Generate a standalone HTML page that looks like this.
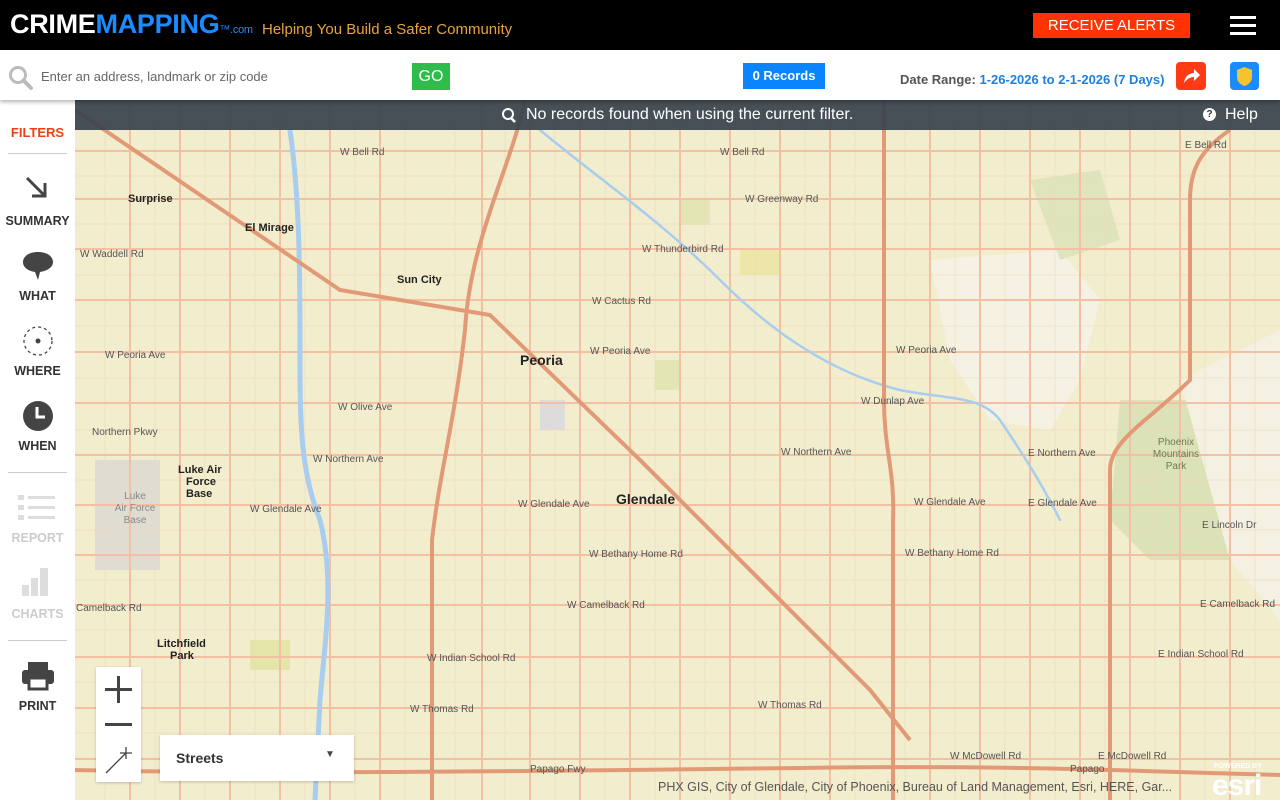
<!DOCTYPE html>
<html><head><meta charset="utf-8"><style>
*{margin:0;padding:0;box-sizing:border-box}
body{width:1280px;height:800px;overflow:hidden;font-family:"Liberation Sans",Arial,sans-serif;background:#f2edcd;position:relative}
#top{position:absolute;left:0;top:0;width:1280px;height:50px;background:#000}
#logo{position:absolute;left:10px;top:9px;font-size:27px;font-weight:bold;letter-spacing:-0.3px;color:#fff}
#logo .b{color:#1a8cff}
#logo small{font-size:11px;color:#1a8cff;font-weight:normal}
#tag{position:absolute;left:262px;top:21px;color:#e8a43c;font-size:15px}
#alerts{position:absolute;left:1033px;top:13px;width:157px;height:25px;background:#ff3300;color:#fff;font-size:15px;text-align:center;line-height:25px}
.hb{position:absolute;left:1230px;width:26px;height:3px;background:#fff}
#bar{position:absolute;left:0;top:50px;width:1280px;height:50px;background:#fff;box-shadow:0 2px 4px rgba(0,0,0,.3);z-index:3}
#ph{position:absolute;left:41px;top:19px;color:#666;font-size:13px}
#go{position:absolute;left:412px;top:63px;width:38px;height:27px;background:#2ebd4a;color:#fff;font-size:16px;text-align:center;line-height:27px;z-index:4}
#rec{position:absolute;left:743px;top:63px;width:82px;height:26px;background:#0a84ff;color:#fff;font-size:13px;font-weight:bold;text-align:center;line-height:26px;z-index:4}
#dr{position:absolute;left:900px;top:72px;font-size:13px;font-weight:bold;color:#555;z-index:4}
#dr span{color:#1f7fdc}
#side{position:absolute;left:0;top:100px;width:75px;height:700px;background:#fff;z-index:2;text-align:center}
.sl{position:absolute;left:0;width:75px;font-size:12.5px;font-weight:bold;color:#333;text-align:center}
.sep{position:absolute;left:8px;width:59px;height:1px;background:#ccc}
#msg{position:absolute;left:75px;top:100px;width:1205px;height:30px;background:rgba(58,68,76,.93);color:#fff;font-size:16px;z-index:2}
#map{position:absolute;left:75px;top:100px}
.ctl{position:absolute;background:#fff;z-index:3;box-shadow:0 1px 3px rgba(0,0,0,.2)}
</style></head><body>
<div id="top">
<div id="logo">CRIME<span class="b">MAPPING</span><small>™.com</small></div>
<div id="tag">Helping You Build a Safer Community</div>
<div id="alerts">RECEIVE ALERTS</div>
<div class="hb" style="top:16px"></div><div class="hb" style="top:24px"></div><div class="hb" style="top:32px"></div>
</div>
<div id="bar">
<svg style="position:absolute;left:8px;top:15px" width="26" height="26"><circle cx="10" cy="10" r="7.5" fill="none" stroke="#bbb" stroke-width="3"/><line x1="15.5" y1="15.5" x2="23" y2="23" stroke="#bbb" stroke-width="4" stroke-linecap="round"/></svg>
<div id="ph">Enter an address, landmark or zip code</div>
<div style="position:absolute;left:1176px;top:12px;width:30px;height:28px;background:#ff3a14;border-radius:4px"><svg width="30" height="28"><path d="M8 21 C9 14 13 11 18 11 L18 7 L24 13 L18 19 L18 15 C14 15 11 17 8 21Z" fill="#fff"/></svg></div>
<div style="position:absolute;left:1230px;top:12px;width:29px;height:28px;background:#1a8cff;border-radius:4px"><svg width="29" height="28"><path d="M14.5 5 L22 8 L22 15 C22 20 18 23 14.5 24 C11 23 7 20 7 15 L7 8Z" fill="#f4c430"/></svg></div>
</div>
<div id="go">GO</div><div id="rec">0 Records</div>
<div id="dr">Date Range: <span>1-26-2026 to 2-1-2026 (7 Days)</span></div>

<svg id="map" width="1205" height="700" viewBox="75 100 1205 700">
<rect x="75" y="100" width="1205" height="700" fill="#f2edcd"/>
<path d="M930 260 L1060 250 L1100 300 L1080 380 L1050 430 L990 420 L950 360Z" fill="#f5f2e4"/>
<path d="M1120 400 L1230 400 L1230 560 L1150 560 L1110 520Z" fill="#dce2b8"/>
<path d="M1180 380 L1280 330 L1280 620 L1230 560Z" fill="#f4f1e2"/>
<path d="M1030 180 L1100 170 L1120 240 L1060 260Z" fill="#dfe4bc"/>
<rect x="95" y="460" width="65" height="110" fill="#dfddd2"/>
<rect x="680" y="200" width="30" height="25" fill="#e2e5b4"/>
<rect x="740" y="250" width="40" height="25" fill="#ece6a8"/>
<rect x="655" y="360" width="25" height="30" fill="#e2e5b4"/>
<rect x="540" y="400" width="25" height="30" fill="#dcdcdc"/>
<rect x="250" y="640" width="40" height="30" fill="#e3e6a8"/>
<g stroke="#efd8bd" stroke-width="1" opacity=".6">
<path d="M75 126H1280M75 176H1280M75 224H1280M75 275H1280M75 326H1280M75 378H1280M75 430H1280M75 480H1280M75 530H1280M75 580H1280M75 630H1280M75 682H1280M75 733H1280"/>
<path d="M105 100V800M155 100V800M205 100V800M255 100V800M305 100V800M355 100V800M405 100V800M455 100V800M505 100V800M555 100V800M605 100V800M655 100V800M705 100V800M755 100V800M805 100V800M855 100V800M905 100V800M955 100V800M1005 100V800M1055 100V800M1105 100V800M1155 100V800M1205 100V800M1255 100V800"/>
</g>
<g stroke="#f3c0a4" stroke-width="2" fill="none">
<path d="M75 151H1280M75 199H1280M75 249H1280M75 300H1280M75 352H1280M75 403H1280M75 455H1280M75 505H1280M75 555H1280M75 605H1280M75 657H1280M75 708H1280M75 759H1280"/>
<path d="M130 100V800M180 100V800M230 100V800M280 100V800M330 100V800M380 100V800M482 100V800M530 100V800M580 100V800M630 100V800M680 100V800M730 100V800M780 100V800M830 100V800M930 100V800M980 100V800M1030 100V800M1080 100V800M1130 100V800M1180 100V800M1230 100V800"/>
</g>
<g stroke="#a8cdef" fill="none" stroke-linecap="round">
<path d="M290 130 C300 200 300 280 300 350 C300 420 300 470 320 520 C335 580 325 640 320 700 L315 800" stroke-width="5"/>
<path d="M540 130 C600 180 660 220 720 280 C760 320 820 370 900 390 C950 400 980 395 1000 420 C1020 450 1040 480 1060 520" stroke-width="2.5"/>
</g>
<g stroke="#e29a76" stroke-width="4" fill="none">
<path d="M75 110 L340 290 L490 315 L640 460 L870 690 L910 740"/>
<path d="M525 100 C510 170 470 240 465 330 C455 420 440 470 432 540 L432 800"/>
<path d="M884 100 L884 400 C884 450 895 470 893 520 L893 800"/>
<path d="M75 770 C300 775 600 770 800 768 C1000 765 1100 770 1280 775"/>
<path d="M1230 130 C1200 150 1190 170 1190 200 L1190 380 C1150 420 1110 440 1110 470 L1110 800"/>
</g>
<g font-family="Liberation Sans,Arial,sans-serif" font-size="10" fill="#555">
<text x="340" y="155">W Bell Rd</text><text x="720" y="155">W Bell Rd</text><text x="1185" y="148">E Bell Rd</text>
<text x="745" y="202">W Greenway Rd</text><text x="642" y="252">W Thunderbird Rd</text>
<text x="80" y="257">W Waddell Rd</text><text x="592" y="304">W Cactus Rd</text>
<text x="105" y="358">W Peoria Ave</text><text x="590" y="354">W Peoria Ave</text><text x="896" y="353">W Peoria Ave</text>
<text x="338" y="410">W Olive Ave</text><text x="861" y="404">W Dunlap Ave</text>
<text x="92" y="435">Northern Pkwy</text><text x="313" y="462">W Northern Ave</text><text x="781" y="455">W Northern Ave</text><text x="1028" y="456">E Northern Ave</text>
<text x="250" y="512">W Glendale Ave</text><text x="518" y="507">W Glendale Ave</text><text x="914" y="505">W Glendale Ave</text><text x="1028" y="506">E Glendale Ave</text>
<text x="589" y="557">W Bethany Home Rd</text><text x="905" y="556">W Bethany Home Rd</text>
<text x="76" y="611">Camelback Rd</text><text x="567" y="608">W Camelback Rd</text><text x="1200" y="607">E Camelback Rd</text>
<text x="427" y="661">W Indian School Rd</text><text x="1158" y="657">E Indian School Rd</text>
<text x="410" y="712">W Thomas Rd</text><text x="758" y="708">W Thomas Rd</text>
<text x="950" y="759">W McDowell Rd</text><text x="1098" y="759">E McDowell Rd</text>
<text x="530" y="772">Papago Fwy</text><text x="1070" y="772">Papago</text><text x="1202" y="528">E Lincoln Dr</text>
</g>
<g font-family="Liberation Sans,Arial,sans-serif" font-size="11" fill="#222" font-weight="bold">
<text x="128" y="202">Surprise</text><text x="245" y="231">El Mirage</text><text x="397" y="283">Sun City</text>
<text x="178" y="473">Luke Air</text><text x="186" y="485">Force</text><text x="186" y="497">Base</text>
<text x="157" y="647">Litchfield</text><text x="170" y="659">Park</text>
</g>
<text x="520" y="365" font-family="Liberation Sans,Arial,sans-serif" font-size="14" font-weight="bold" fill="#222">Peoria</text>
<text x="616" y="504" font-family="Liberation Sans,Arial,sans-serif" font-size="14" font-weight="bold" fill="#222">Glendale</text>
<g font-family="Liberation Sans,Arial,sans-serif" font-size="10" fill="#6b7a55" text-anchor="middle"><text x="1176" y="445">Phoenix</text><text x="1176" y="457">Mountains</text><text x="1176" y="469">Park</text></g>
<g font-family="Liberation Sans,Arial,sans-serif" font-size="10" fill="#888" text-anchor="middle"><text x="135" y="499">Luke</text><text x="135" y="511">Air Force</text><text x="135" y="523">Base</text></g>
<text x="658" y="791" font-family="Liberation Sans,Arial,sans-serif" font-size="12.5" fill="#555">PHX GIS, City of Glendale, City of Phoenix, Bureau of Land Management, Esri, HERE, Gar...</text>
<text x="1214" y="768" font-family="Liberation Sans,Arial,sans-serif" font-size="7" fill="#fff" font-weight="bold">POWERED BY</text>
<text x="1212" y="795" font-family="Liberation Sans,Arial,sans-serif" font-size="30" fill="#fff" font-weight="bold" letter-spacing="-1">esri</text>
</svg>

<div id="msg"><svg style="position:absolute;left:424px;top:6px" width="18" height="18"><circle cx="9" cy="8" r="5" fill="none" stroke="#fff" stroke-width="2"/><line x1="12" y1="12" x2="16" y2="16" stroke="#fff" stroke-width="2.5"/></svg><span style="position:absolute;left:451px;top:6px">No records found when using the current filter.</span>
<span style="position:absolute;left:1128px;top:8px;width:13px;height:13px;border-radius:50%;background:#fff;color:#333;font-size:10px;font-weight:bold;text-align:center;line-height:13px">?</span><span style="position:absolute;left:1150px;top:6px">Help</span></div>

<div id="side">
<div class="sl" style="top:25px;color:#f04010;font-size:13px">FILTERS</div>
<div class="sep" style="top:53px"></div>
<svg style="position:absolute;left:24px;top:75px" width="26" height="26"><path d="M3 3 L20 20 M8 21 H21 V8" stroke="#444" stroke-width="3" fill="none"/></svg>
<div class="sl" style="top:114px">SUMMARY</div>
<svg style="position:absolute;left:21px;top:150px" width="34" height="32"><path d="M17 2 C27 2 32 7 32 12 C32 18 25 21 19 22 L17 30 L14 22 C8 21 2 18 2 12 C2 7 7 2 17 2Z" fill="#444"/></svg>
<div class="sl" style="top:189px">WHAT</div>
<svg style="position:absolute;left:22px;top:225px" width="32" height="32"><circle cx="16" cy="16" r="14" fill="none" stroke="#444" stroke-width="1.3" stroke-dasharray="3 3"/><circle cx="16" cy="16" r="2.5" fill="#444"/></svg>
<div class="sl" style="top:264px">WHERE</div>
<svg style="position:absolute;left:22px;top:300px" width="32" height="32"><circle cx="16" cy="16" r="15" fill="#444"/><path d="M15 7 V17 H23" stroke="#fff" stroke-width="3" fill="none"/></svg>
<div class="sl" style="top:339px">WHEN</div>
<div class="sep" style="top:372px"></div>
<svg style="position:absolute;left:18px;top:395px" width="40" height="28" fill="#ddd"><rect x="0" y="0" width="6" height="5"/><rect x="10" y="1" width="27" height="3"/><rect x="0" y="10" width="6" height="5"/><rect x="10" y="11" width="27" height="3"/><rect x="0" y="20" width="6" height="5"/><rect x="10" y="21" width="27" height="3"/></svg>
<div class="sl" style="top:431px;color:#ccc">REPORT</div>
<svg style="position:absolute;left:22px;top:468px" width="32" height="28" fill="#ddd"><rect x="0" y="17" width="7" height="11"/><rect x="9" y="10" width="7" height="18"/><rect x="18" y="0" width="8" height="28"/></svg>
<div class="sl" style="top:507px;color:#ccc">CHARTS</div>
<div class="sep" style="top:540px"></div>
<svg style="position:absolute;left:22px;top:560px" width="32" height="32"><rect x="6" y="2" width="20" height="8" fill="#444"/><rect x="0" y="10" width="32" height="14" rx="3" fill="#444"/><rect x="7" y="18" width="18" height="11" fill="#fff" stroke="#444" stroke-width="3"/></svg>
<div class="sl" style="top:599px">PRINT</div>
</div>

<div class="ctl" style="left:96px;top:667px;width:45px;height:115px">
<div style="position:absolute;left:9px;top:21px;width:27px;height:3px;background:#444"></div>
<div style="position:absolute;left:21px;top:9px;width:3px;height:27px;background:#444"></div>
<div style="position:absolute;left:9px;top:56px;width:27px;height:3px;background:#444"></div>
<svg style="position:absolute;left:8px;top:78px" width="30" height="30"><path d="M2 28 L22 8 M22 2 V14 M16 8 H28" stroke="#444" stroke-width="1.3" fill="none"/></svg>
</div>
<div class="ctl" style="left:160px;top:735px;width:194px;height:46px">
<span style="position:absolute;left:16px;top:15px;font-size:14px;font-weight:bold;color:#333">Streets</span>
<span style="position:absolute;left:165px;top:14px;font-size:10px;color:#444">▼</span>
</div>
</body></html>
